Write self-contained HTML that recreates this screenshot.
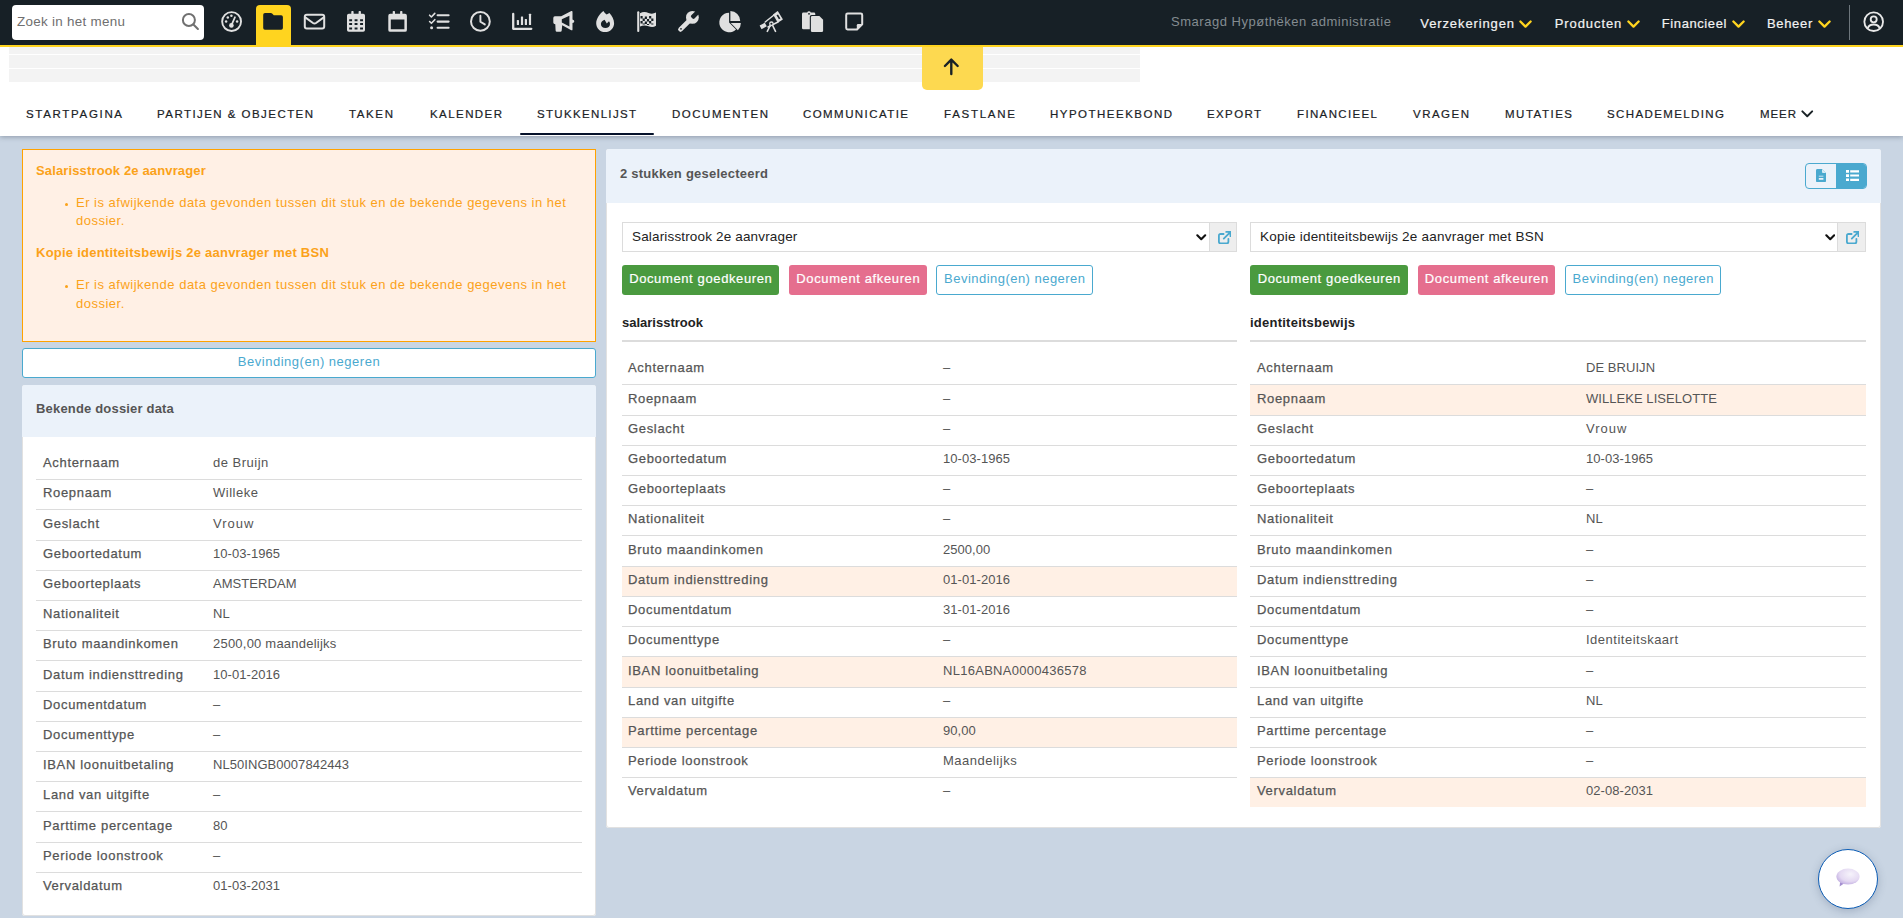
<!DOCTYPE html>
<html lang="nl"><head><meta charset="utf-8"><title>Stukkenlijst</title>
<style>
*{box-sizing:border-box;margin:0;padding:0}
html,body{width:1903px;height:918px;overflow:hidden}
body{background:#c9d5e3;font-family:"Liberation Sans",sans-serif;font-size:13px;color:#555;position:relative}
#top{position:absolute;left:0;top:0;width:1903px;height:47px;background:#172026;border-bottom:2px solid #ffd41f;z-index:5}
#search{position:absolute;left:12px;top:5px;width:192px;height:35px;background:#fff;border-radius:4px}
#search .ph{position:absolute;left:5px;top:8px;font-size:13.4px;line-height:17px;color:#6f6f6f;letter-spacing:.3px;white-space:nowrap}
#search .mag{position:absolute;left:169px;top:7px;width:20px;height:20px}
#acttab{position:absolute;left:256px;top:5px;width:35px;height:42px;background:#ffd41f;border-radius:4px 4px 0 0}
#admin{position:absolute;left:1171px;top:14px;font-size:13px;line-height:16px;color:#848c91;white-space:nowrap;letter-spacing:.52px}
.menu{position:absolute;top:16px;font-size:13px;line-height:16px;color:#f2f2f2;white-space:nowrap;letter-spacing:.5px;-webkit-text-stroke:.2px #f2f2f2}
.chev{position:absolute;top:19.6px;width:13px;height:8.5px}
#sep{position:absolute;left:1849px;top:5px;width:1.3px;height:35px;background:#6d767c}
#user{position:absolute;left:1862.9px;top:10.7px;width:21.4px;height:21.4px}
#nav{position:absolute;left:0;top:47px;width:1903px;height:89px;background:#fff;box-shadow:0 1px 5px rgba(40,50,70,.36);z-index:3}
.sk{position:absolute;left:9px;width:1131px;background:#f3f3f3}
#arrow{position:absolute;left:921.5px;top:0;width:61px;height:42.5px;background:#fdd950;border-radius:0 0 5px 5px;display:flex;align-items:center;justify-content:center}
.tab{position:absolute;top:59.3px;font-size:11.5px;line-height:16px;color:#1a2226;white-space:nowrap;letter-spacing:1px;-webkit-text-stroke:.2px #1a2226}
.mchev{position:absolute;left:1801px;top:63px;width:12.5px;height:8px}
#uline{position:absolute;left:520px;top:86px;width:134px;height:2px;background:#06122b;border-radius:1px}
#alert{position:absolute;left:22px;top:149px;width:574px;height:193px;background:#fff0e5;border:1px solid #ffa200;color:#fba21a}
#alert h4{position:absolute;left:13px;font-size:13px;line-height:16px;font-weight:bold;white-space:nowrap;letter-spacing:.14px}
#alert h4.b{letter-spacing:.24px}
#alert p{position:absolute;left:53px;font-size:13px;line-height:17.8px;white-space:nowrap;letter-spacing:.5px}
#alert .dot{position:absolute;left:41.7px;width:3.4px;height:3.4px;border-radius:50%;background:#fba21a}
#negbtn{position:absolute;left:22px;top:348px;width:574px;height:30px;background:#fff;border:1px solid #4aa9cf;border-radius:3px;color:#4aa9cf;font-size:13px;letter-spacing:.52px;text-align:center;line-height:26px}
#cardL{position:absolute;left:22px;top:385px;width:574px;height:531px;background:#fff;border-radius:3px;overflow:hidden;box-shadow:inset 0 0 0 1px #e1e1e1}
.hd{position:absolute;left:0;top:0;width:100%;background:#ebf2fa}
#cardL .hd{height:52px}
.ht{position:absolute;font-weight:bold;font-size:13px;line-height:16px;color:#555;white-space:nowrap}
#cardL .ht{left:14px;top:16px;letter-spacing:.18px}
.tbl{position:absolute}
.row{position:relative;height:30px;border-bottom:1px solid #dcdcdc}
.row.last{border-bottom:0}
.row.last span{bottom:8.5px}
.row.hl{background:#fff0e5}
.row span{position:absolute;bottom:8.5px;line-height:16px;white-space:nowrap}
.row .l{letter-spacing:.67px;-webkit-text-stroke:.25px #555}
.row .v{letter-spacing:.12px}
.tl{left:14px;top:65px;width:546px}
.tl .l{left:7px}.tl .v{left:177px}
#cardR{position:absolute;left:606px;top:149px;width:1275px;height:679px;background:#fff;border-radius:3px;overflow:hidden;box-shadow:inset 0 0 0 1px #e1e1e1}
#cardR .hd{height:54px}
#cardR .ht{left:14px;top:17px;letter-spacing:.23px}
#toggle{position:absolute;left:1199px;top:14px;width:62px;height:26px;border:1px solid #4aa9cf;border-radius:4px;overflow:hidden}
#toggle span{position:absolute;top:0;height:24px;display:flex;align-items:center;justify-content:center}
#toggle .t1{left:0;width:30px}
#toggle .t2{left:30px;width:30px;background:#4aa9cf}
.col{position:absolute;top:0;width:616px;height:678px}
.sel{position:absolute;left:0;top:73px;width:588px;height:30px;border:1px solid #dcdcdc;background:#fff}
.sel .st{position:absolute;left:9px;top:5px;font-size:13.5px;line-height:17px;color:#222;white-space:nowrap;letter-spacing:.16px}
.sel .st.b{letter-spacing:.23px}
.sel .sarr{position:absolute;left:573.6px;top:11.2px;width:10.5px;height:7px}
.addon{position:absolute;left:587.5px;top:73px;width:28px;height:30px;background:#eee;border:1px solid #dcdcdc;border-left:0}
.addon svg{position:absolute;left:8.4px;top:7.6px;width:13.4px;height:13.4px}
.c1 .sel{width:587.5px}.c1 .addon{width:27.5px}.c1 .hr,.c1 .tbl{width:615px}.c1 .sarr{left:573.2px}
.btn{position:absolute;top:116px;height:30px;border-radius:3px;font-size:13px;line-height:27px;text-align:center;white-space:nowrap}
.btn.g{background:#4a9a3f;color:#fff}
.btn.p{background:#e56e8e;color:#fff}
.btn.o{background:#fff;border:1px solid #4aa9cf;color:#4aa9cf;line-height:25px}
.btn span{letter-spacing:.62px;margin-right:-.62px}
.btn.o span{letter-spacing:.47px}
.btn.g span,.btn.p span{-webkit-text-stroke:.2px #fff}
h5{position:absolute;left:0;top:166px;font-size:13px;line-height:16px;font-weight:bold;color:#222;white-space:nowrap}
.hr{position:absolute;left:0;top:191px;width:616px;height:2px;background:#dcdcdc}
.tm,.tr{left:0;top:205px;width:616px}
.tm .l{left:6px}.tm .v{left:321px}
.tr .l{left:7px}.tr .v{left:336px}
#chat{position:absolute;left:1818px;top:849px;width:60px;height:60px;border-radius:50%;background:#fff;border:1.8px solid #0b5cb5;box-shadow:0 2px 8px rgba(60,80,110,.28);display:flex;align-items:center;justify-content:center;z-index:9}

</style></head><body>
<div id="top">
<div id="search"><span class="ph">Zoek in het menu</span><svg class="mag" viewBox="0 0 20 20"><circle cx="7.9" cy="8" r="6" fill="none" stroke="#707070" stroke-width="2"/><path d="M12.4 12.6 L16.9 16.9" stroke="#707070" stroke-width="2.1" stroke-linecap="round"/></svg></div>
<div id="acttab"></div>
<svg id="icons" width="900" height="46" viewBox="0 0 900 46" style="position:absolute;left:0;top:0">
<g fill="none" stroke="#e0e0e0" stroke-width="2" stroke-linecap="round" stroke-linejoin="round">
<!-- gauge -->
<circle cx="231.6" cy="21.6" r="9.45" stroke-width="1.9"/>
<path d="M231.4 25.4 L235 17.2" stroke-width="1.7"/>
<!-- envelope -->
<rect x="304.8" y="14.8" width="19.4" height="13.6" rx="2"/>
<path d="M305.6 17.6 L313 23 Q314.5 24 316 23 L323.4 17.6"/>
<!-- tasks -->
<path d="M429.6 15.2 L431.4 17 L434.8 13.4 M429.6 21.5 L431.4 23.3 L434.8 19.7" stroke-width="1.6"/>
<path d="M437.6 15.2 H448.6 M437.6 21.6 H448.6 M437.6 27.8 H448.6" stroke-width="2.1"/>
<!-- clock -->
<circle cx="480.4" cy="21.4" r="9.4"/>
<path d="M480.4 15.8 V21.8 L484.8 24.4" stroke-width="1.9"/>
<!-- chart-bar axis -->
<path d="M513.2 14 V28.8 H531.3" stroke-width="2.3"/>
<!-- telescope legs + tube outline -->
<path d="M770.5 25 L767.3 31.4 M772.4 25 L775.5 31.4" stroke-width="1.6"/>
<path d="M765.2 22 L774 15 M768 27 L778 22" stroke-width="1.5"/>
<circle cx="771.4" cy="23.7" r="1.7" stroke-width="1.3" fill="#172026"/>
<!-- sticky note -->
<path d="M847.6 13.5 H860.8 a1.4 1.4 0 0 1 1.4 1.4 V24.2 L857 29.5 H847.6 a1.4 1.4 0 0 1 -1.4 -1.4 V14.9 a1.4 1.4 0 0 1 1.4 -1.4 z"/>
</g>
<g fill="#e0e0e0">
<!-- gauge bits -->
<circle cx="231.4" cy="25.4" r="2.3"/>
<circle cx="226.1" cy="21.5" r="1.25"/><circle cx="227.8" cy="17.6" r="1.25"/><circle cx="231.4" cy="15.7" r="1.25"/><circle cx="237.1" cy="21.5" r="1.25"/>
<!-- tasks dot -->
<circle cx="431.6" cy="27.8" r="1.5"/>
<!-- calendar-alt -->
<rect x="351.3" y="11" width="2.3" height="4.5" rx=".8"/><rect x="358.6" y="11" width="2.3" height="4.5" rx=".8"/>
<path fill-rule="evenodd" d="M348.8 13.8 H363.2 a1.8 1.8 0 0 1 1.8 1.8 V30 a1.8 1.8 0 0 1 -1.8 1.8 H348.8 a1.8 1.8 0 0 1 -1.8 -1.8 V15.6 a1.8 1.8 0 0 1 1.8 -1.8 z M349.2 19.3 h2.9 v2.0 h-2.9 z M354.6 19.3 h2.9 v2.0 h-2.9 z M360.1 19.3 h2.9 v2.0 h-2.9 z M349.2 23.1 h2.9 v2.0 h-2.9 z M354.6 23.1 h2.9 v2.0 h-2.9 z M360.1 23.1 h2.9 v2.0 h-2.9 z M349.2 27.5 h2.9 v1.9 h-2.9 z M354.6 27.5 h2.9 v1.9 h-2.9 z M360.1 27.5 h2.9 v1.9 h-2.9 z"/>
<!-- calendar -->
<rect x="392.7" y="11" width="2.3" height="4.5" rx=".8"/><rect x="400.1" y="11" width="2.3" height="4.5" rx=".8"/>
<path fill-rule="evenodd" d="M390.2 13.8 H405 a1.9 1.9 0 0 1 1.9 1.9 V29.9 a1.9 1.9 0 0 1 -1.9 1.9 H390.2 a1.9 1.9 0 0 1 -1.9 -1.9 V15.7 a1.9 1.9 0 0 1 1.9 -1.9 z M390.8 19.5 H404.4 V29.2 H390.8 z"/>
<!-- chart bars -->
<rect x="516.8" y="20" width="2.2" height="4.9" rx=".5"/><rect x="520.9" y="16.6" width="2.2" height="8.3" rx=".5"/><rect x="524.8" y="19" width="2.2" height="5.9" rx=".5"/><rect x="528.9" y="13.8" width="2.2" height="11.1" rx=".5"/>
<!-- bullhorn -->
<path fill-rule="evenodd" d="M554.9 16.3 H561.2 L571.3 11.1 Q572.5 10.6 572.5 11.9 V19.4 Q574.3 19.8 574.3 21.2 Q574.3 22.6 572.5 23 V29.4 Q572.5 30.7 571.3 30.2 L562.2 25.2 L561.7 30.6 Q561.6 31.8 560.4 31.8 H556.9 Q555.7 31.8 555.6 30.6 L555.3 24.2 Q553.3 24.2 553.3 22.4 V17.9 Q553.3 16.3 554.9 16.3 Z M561.8 19.3 V22.4 L569.4 26.6 V15.8 Z"/>
<!-- fire -->
<path fill-rule="evenodd" d="M603.4 11 C604.2 12.4 605.4 13.6 606.6 14.5 C607.6 14 608.6 13.5 609.4 12.9 C612 15.4 614.1 19.4 614.1 23.2 C614.1 28.2 610.1 32.1 605.1 32.1 C600.1 32.1 596.2 28.2 596.2 23.2 C596.2 18.4 600 13.6 603.4 11 Z M604.6 19.8 C602.3 20.6 600.9 22.2 600.9 24 C600.9 26.4 602.9 28 605.4 28 C608 28 610 26.4 610 24 C610 22.9 609.6 22 609 21.2 L606.8 23.4 Z"/>
<!-- flag -->
<rect x="637.2" y="11.2" width="2.1" height="20.8" rx="1"/>
<path d="M640 13.2 C643 11.6 646 12 648.5 13 C651 14 653.5 14 656 12.6 V25.8 C653.5 27.4 651 27.2 648.5 26.2 C646 25.2 643 25 640 26.6 Z"/>
<!-- wrench -->
<circle cx="692.4" cy="17.4" r="6.4"/>
<path d="M690.6 19.3 L680.5 29.4" stroke="#e0e0e0" stroke-width="4.7" stroke-linecap="round"/>
<rect x="-2.25" y="-9" width="4.5" height="9.4" rx="1.4" transform="translate(692.2,17.6) rotate(45)" fill="#172026"/>
<!-- pie -->
<path d="M729.1 22.5 L736.03 29.43 A9.8 9.8 0 1 1 729.1 12.7 Z"/>
<path d="M730.7 23 L740.9 23 A10.2 10.2 0 0 1 737.9 30.2 Z"/>
<path d="M730.4 20.9 L730.4 11.1 A9.8 9.8 0 0 1 740.2 20.9 Z"/>
<!-- telescope -->
<path d="M759.6 25.6 L764.8 22.7 L766.8 26.3 L761.6 29.2 Z"/>
<path fill-rule="evenodd" d="M773 14.5 L777.3 11.2 Q777.8 10.9 778.1 11.4 L782.7 19 Q783 19.5 782.5 19.8 L777.8 22.7 Z M776.5 15.3 L778 14.4 L780.4 18.4 L778.9 19.3 Z"/>
<!-- paste -->
<path fill-rule="evenodd" d="M803.4 12.6 H807.2 A1.9 1.9 0 0 1 810.8 12.6 H813.9 Q815.3 12.6 815.3 14 V15 H811.6 Q809.8 15 809.8 16.8 V29.3 H803.4 Q802 29.3 802 27.9 V14 Q802 12.6 803.4 12.6 Z M809 12.9 a.85 .85 0 1 0 0.01 0 z"/>
<path d="M812.2 16 H819.4 L823.1 19.8 V30.7 Q823.1 32.1 821.7 32.1 H812.2 Q810.9 32.1 810.9 30.7 V17.4 Q810.9 16 812.2 16 Z"/>
<!-- sticky fold -->
<path d="M862.2 24 H858 Q856.8 24 856.8 25.2 V29.5 Z"/>
</g>
<g fill="#172026">
<!-- folder -->
<path d="M263.2 14.8 a1.8 1.8 0 0 1 1.8 -1.8 h5.9 q.7 0 1.2 .5 l1.7 1.7 h7.3 a1.8 1.8 0 0 1 1.8 1.8 v11 a1.8 1.8 0 0 1 -1.8 1.8 h-16.1 a1.8 1.8 0 0 1 -1.8 -1.8 z"/>
<!-- flag checkers -->
<path d="M640.50 15.90 h2.15 v2.5 h-2.15z M644.80 16.40 h2.15 v2.5 h-2.15z M649.10 15.90 h2.15 v2.5 h-2.15z M642.65 18.40 h2.15 v2.5 h-2.15z M646.95 18.90 h2.15 v2.5 h-2.15z M651.25 18.40 h2.15 v2.5 h-2.15z M640.50 20.90 h2.15 v2.5 h-2.15z M644.80 21.40 h2.15 v2.5 h-2.15z M649.10 20.90 h2.15 v2.5 h-2.15z M642.65 23.40 h2.15 v1.2 h-2.15z M646.95 23.90 h2.15 v1.2 h-2.15z M651.25 23.40 h2.15 v1.2 h-2.15z"/>
<circle cx="681" cy="28.8" r=".85"/>
</g>
</svg>

<span id="admin">Smaragd Hypøthëken administratie</span>
<span class="menu" style="left:1420.3px;letter-spacing:0.89px">Verzekeringen</span><svg class="chev" style="left:1519.3px" viewBox="0 0 14 9"><path d="M1.5 1.5 L7 7 L12.5 1.5" fill="none" stroke="#ffd41f" stroke-width="2.5" stroke-linecap="round" stroke-linejoin="round"/></svg>
<span class="menu" style="left:1554.7px;letter-spacing:0.92px">Producten</span><svg class="chev" style="left:1626.6px" viewBox="0 0 14 9"><path d="M1.5 1.5 L7 7 L12.5 1.5" fill="none" stroke="#ffd41f" stroke-width="2.5" stroke-linecap="round" stroke-linejoin="round"/></svg>
<span class="menu" style="left:1661.8px;letter-spacing:0.59px">Financieel</span><svg class="chev" style="left:1731.5px" viewBox="0 0 14 9"><path d="M1.5 1.5 L7 7 L12.5 1.5" fill="none" stroke="#ffd41f" stroke-width="2.5" stroke-linecap="round" stroke-linejoin="round"/></svg>
<span class="menu" style="left:1766.9px;letter-spacing:0.70px">Beheer</span><svg class="chev" style="left:1818px" viewBox="0 0 14 9"><path d="M1.5 1.5 L7 7 L12.5 1.5" fill="none" stroke="#ffd41f" stroke-width="2.5" stroke-linecap="round" stroke-linejoin="round"/></svg>
<div id="sep"></div>
<svg id="user" viewBox="0 0 22 22"><circle cx="11" cy="11" r="9.6" fill="none" stroke="#e8e8e8" stroke-width="1.9"/><circle cx="11" cy="8.6" r="3.1" fill="none" stroke="#e8e8e8" stroke-width="1.9"/><path d="M4.9 17.6 C6 14.6 8 13.9 11 13.9 C14 13.9 16 14.6 17.1 17.6" fill="none" stroke="#e8e8e8" stroke-width="1.9"/></svg>
</div>
<div id="nav">
<div class="sk" style="top:0;height:7px"></div><div class="sk" style="top:8px;height:13px"></div><div class="sk" style="top:22px;height:13px"></div>
<div id="arrow"><svg viewBox="0 0 20 20" width="20.6" height="20.6" style="margin-top:-3.4px;margin-left:-.6px"><path d="M10 17.5 V3.5 M3.8 9.7 L10 3.5 L16.2 9.7" fill="none" stroke="#1a2226" stroke-width="2.3" stroke-linecap="round" stroke-linejoin="round"/></svg></div>
<span class="tab" style="left:26px;letter-spacing:1.68px">STARTPAGINA</span>
<span class="tab" style="left:157px;letter-spacing:1.45px">PARTIJEN &amp; OBJECTEN</span>
<span class="tab" style="left:349px;letter-spacing:1.62px">TAKEN</span>
<span class="tab" style="left:430px;letter-spacing:1.43px">KALENDER</span>
<span class="tab" style="left:537px;letter-spacing:1.33px">STUKKENLIJST</span>
<span class="tab" style="left:672px;letter-spacing:1.51px">DOCUMENTEN</span>
<span class="tab" style="left:803px;letter-spacing:1.43px">COMMUNICATIE</span>
<span class="tab" style="left:944px;letter-spacing:1.74px">FASTLANE</span>
<span class="tab" style="left:1050px;letter-spacing:1.49px">HYPOTHEEKBOND</span>
<span class="tab" style="left:1207px;letter-spacing:1.38px">EXPORT</span>
<span class="tab" style="left:1297px;letter-spacing:1.36px">FINANCIEEL</span>
<span class="tab" style="left:1413px;letter-spacing:1.48px">VRAGEN</span>
<span class="tab" style="left:1505px;letter-spacing:1.51px">MUTATIES</span>
<span class="tab" style="left:1607px;letter-spacing:1.39px">SCHADEMELDING</span>
<span class="tab" style="left:1760px;letter-spacing:0.92px">MEER</span>
<svg class="mchev" viewBox="0 0 14 9"><path d="M1.5 1.5 L7 7 L12.5 1.5" fill="none" stroke="#1a2226" stroke-width="2.2" stroke-linecap="round" stroke-linejoin="round"/></svg>
<div id="uline"></div>
</div>

<div id="alert">
<h4 style="top:13px">Salarisstrook 2e aanvrager</h4>
<i class="dot" style="top:52.8px"></i>
<p style="top:44px">Er is afwijkende data gevonden tussen dit stuk en de bekende gegevens in het<br>dossier.</p>
<h4 class="b" style="top:95px">Kopie identiteitsbewijs 2e aanvrager met BSN</h4>
<i class="dot" style="top:134.8px"></i>
<p style="top:126px;line-height:18.8px">Er is afwijkende data gevonden tussen dit stuk en de bekende gegevens in het<br>dossier.</p>
</div>
<div id="negbtn"><span>Bevinding(en) negeren</span></div>

<div id="cardL">
<div class="hd"><span class="ht">Bekende dossier data</span></div>
<div class="tbl tl">
<div class="row" style="height:30px"><span class="l">Achternaam</span><span class="v" style="letter-spacing:0.5px">de Bruijn</span></div>
<div class="row" style="height:30px"><span class="l">Roepnaam</span><span class="v" style="letter-spacing:0.5px">Willeke</span></div>
<div class="row" style="height:31px"><span class="l">Geslacht</span><span class="v" style="letter-spacing:1.0px">Vrouw</span></div>
<div class="row" style="height:30px"><span class="l">Geboortedatum</span><span class="v" style="letter-spacing:0.05px">10-03-1965</span></div>
<div class="row" style="height:30px"><span class="l">Geboorteplaats</span><span class="v" style="letter-spacing:0.05px">AMSTERDAM</span></div>
<div class="row" style="height:30px"><span class="l">Nationaliteit</span><span class="v" style="letter-spacing:0.05px">NL</span></div>
<div class="row" style="height:30px"><span class="l">Bruto maandinkomen</span><span class="v" style="letter-spacing:0.22px">2500,00 maandelijks</span></div>
<div class="row" style="height:31px"><span class="l">Datum indiensttreding</span><span class="v" style="letter-spacing:0.05px">10-01-2016</span></div>
<div class="row" style="height:30px"><span class="l">Documentdatum</span><span class="v" style="letter-spacing:0.05px">–</span></div>
<div class="row" style="height:30px"><span class="l">Documenttype</span><span class="v" style="letter-spacing:0.05px">–</span></div>
<div class="row" style="height:30px"><span class="l">IBAN loonuitbetaling</span><span class="v" style="letter-spacing:0.05px">NL50INGB0007842443</span></div>
<div class="row" style="height:30px"><span class="l">Land van uitgifte</span><span class="v" style="letter-spacing:0.05px">–</span></div>
<div class="row" style="height:31px"><span class="l">Parttime percentage</span><span class="v" style="letter-spacing:0.05px">80</span></div>
<div class="row" style="height:30px"><span class="l">Periode loonstrook</span><span class="v" style="letter-spacing:0.05px">–</span></div>
<div class="row last" style="height:29px"><span class="l">Vervaldatum</span><span class="v" style="letter-spacing:0.05px">01-03-2031</span></div>
</div>
</div>

<div id="cardR">
<div class="hd"><span class="ht">2 stukken geselecteerd</span>
<div id="toggle"><span class="t1"></span><span class="t2"></span><svg style="position:absolute;left:10px;top:4.5px" viewBox="0 0 10 13.4" width="10" height="13.4"><path d="M0 1.4 C0 .6 .6 0 1.4 0 H6 L10 4 V12 C10 12.8 9.4 13.4 8.6 13.4 H1.4 C.6 13.4 0 12.8 0 12 Z" fill="#4aa9cf"/><path d="M6 0 V3 Q6 4 7 4 H10 Z" fill="#d7ebf5"/><path d="M2.8 7.2 H7.4" stroke="#ebf2fa" stroke-width=".8"/><path d="M2.8 9.8 H7.4" stroke="#ebf2fa" stroke-width="1.7"/></svg><svg style="position:absolute;left:40px;top:5.7px" viewBox="0 0 13.2 11.2" width="13.2" height="11.2"><path d="M0 0h3v2.7h-3z M0 4.3h3v2.6h-3z M0 8.5h3v2.7h-3z M4.2 .3h9v2.1h-9z M4.2 4.5h9v2.1h-9z M4.2 8.8h9v2.1h-9z" fill="#fff"/></svg></div>
</div>
<div class="col c1" style="left:16px">
<div class="sel"><span class="st">Salarisstrook 2e aanvrager</span><svg class="sarr" viewBox="0 0 12 8"><path d="M1.5 1.5 L6 6 L10.5 1.5" fill="none" stroke="#111" stroke-width="2.4" stroke-linecap="round" stroke-linejoin="round"/></svg></div>
<div class="addon"><svg viewBox="0 0 13.4 13.4"><path d="M5.6 3 H2.6 Q.9 3 .9 4.7 V10.8 Q.9 12.5 2.6 12.5 H8.7 Q10.4 12.5 10.4 10.8 V7.8 M8.2 .9 H12.5 V5.2 M12.3 1.1 L5.8 7.6" fill="none" stroke="#4aa9cf" stroke-width="1.8" stroke-linecap="round" stroke-linejoin="round"/></svg></div>
<div class="btn g" style="left:0;width:157px"><span>Document goedkeuren</span></div>
<div class="btn p" style="left:167px;width:138px"><span>Document afkeuren</span></div>
<div class="btn o" style="left:314px;width:157px"><span>Bevinding(en) negeren</span></div>
<h5>salarisstrook</h5>
<div class="hr"></div>
<div class="tbl tm">
<div class="row" style="height:31px"><span class="l">Achternaam</span><span class="v" style="letter-spacing:0.05px">–</span></div>
<div class="row" style="height:31px"><span class="l">Roepnaam</span><span class="v" style="letter-spacing:0.05px">–</span></div>
<div class="row" style="height:30px"><span class="l">Geslacht</span><span class="v" style="letter-spacing:0.05px">–</span></div>
<div class="row" style="height:30px"><span class="l">Geboortedatum</span><span class="v" style="letter-spacing:0.05px">10-03-1965</span></div>
<div class="row" style="height:30px"><span class="l">Geboorteplaats</span><span class="v" style="letter-spacing:0.05px">–</span></div>
<div class="row" style="height:30px"><span class="l">Nationaliteit</span><span class="v" style="letter-spacing:0.05px">–</span></div>
<div class="row" style="height:31px"><span class="l">Bruto maandinkomen</span><span class="v" style="letter-spacing:0.05px">2500,00</span></div>
<div class="row hl" style="height:30px"><span class="l">Datum indiensttreding</span><span class="v" style="letter-spacing:0.05px">01-01-2016</span></div>
<div class="row" style="height:30px"><span class="l">Documentdatum</span><span class="v" style="letter-spacing:0.05px">31-01-2016</span></div>
<div class="row" style="height:30px"><span class="l">Documenttype</span><span class="v" style="letter-spacing:0.05px">–</span></div>
<div class="row hl" style="height:31px"><span class="l">IBAN loonuitbetaling</span><span class="v" style="letter-spacing:0.28px">NL16ABNA0000436578</span></div>
<div class="row" style="height:30px"><span class="l">Land van uitgifte</span><span class="v" style="letter-spacing:0.05px">–</span></div>
<div class="row hl" style="height:30px"><span class="l">Parttime percentage</span><span class="v" style="letter-spacing:0.05px">90,00</span></div>
<div class="row" style="height:30px"><span class="l">Periode loonstrook</span><span class="v" style="letter-spacing:0.5px">Maandelijks</span></div>
<div class="row last" style="height:29px"><span class="l">Vervaldatum</span><span class="v" style="letter-spacing:0.05px">–</span></div>
</div>
</div>
<div class="col" style="left:644px">
<div class="sel"><span class="st b">Kopie identiteitsbewijs 2e aanvrager met BSN</span><svg class="sarr" viewBox="0 0 12 8"><path d="M1.5 1.5 L6 6 L10.5 1.5" fill="none" stroke="#111" stroke-width="2.4" stroke-linecap="round" stroke-linejoin="round"/></svg></div>
<div class="addon"><svg viewBox="0 0 13.4 13.4"><path d="M5.6 3 H2.6 Q.9 3 .9 4.7 V10.8 Q.9 12.5 2.6 12.5 H8.7 Q10.4 12.5 10.4 10.8 V7.8 M8.2 .9 H12.5 V5.2 M12.3 1.1 L5.8 7.6" fill="none" stroke="#4aa9cf" stroke-width="1.8" stroke-linecap="round" stroke-linejoin="round"/></svg></div>
<div class="btn g" style="left:0;width:158px"><span>Document goedkeuren</span></div>
<div class="btn p" style="left:168px;width:137px"><span>Document afkeuren</span></div>
<div class="btn o" style="left:315px;width:156px"><span>Bevinding(en) negeren</span></div>
<h5 style="letter-spacing:.24px">identiteitsbewijs</h5>
<div class="hr"></div>
<div class="tbl tr">
<div class="row" style="height:31px"><span class="l">Achternaam</span><span class="v" style="letter-spacing:0.05px">DE BRUIJN</span></div>
<div class="row hl" style="height:31px"><span class="l">Roepnaam</span><span class="v" style="letter-spacing:0.05px">WILLEKE LISELOTTE</span></div>
<div class="row" style="height:30px"><span class="l">Geslacht</span><span class="v" style="letter-spacing:1.0px">Vrouw</span></div>
<div class="row" style="height:30px"><span class="l">Geboortedatum</span><span class="v" style="letter-spacing:0.05px">10-03-1965</span></div>
<div class="row" style="height:30px"><span class="l">Geboorteplaats</span><span class="v" style="letter-spacing:0.05px">–</span></div>
<div class="row" style="height:30px"><span class="l">Nationaliteit</span><span class="v" style="letter-spacing:0.05px">NL</span></div>
<div class="row" style="height:31px"><span class="l">Bruto maandinkomen</span><span class="v" style="letter-spacing:0.05px">–</span></div>
<div class="row" style="height:30px"><span class="l">Datum indiensttreding</span><span class="v" style="letter-spacing:0.05px">–</span></div>
<div class="row" style="height:30px"><span class="l">Documentdatum</span><span class="v" style="letter-spacing:0.05px">–</span></div>
<div class="row" style="height:30px"><span class="l">Documenttype</span><span class="v" style="letter-spacing:0.5px">Identiteitskaart</span></div>
<div class="row" style="height:31px"><span class="l">IBAN loonuitbetaling</span><span class="v" style="letter-spacing:0.05px">–</span></div>
<div class="row" style="height:30px"><span class="l">Land van uitgifte</span><span class="v" style="letter-spacing:0.05px">NL</span></div>
<div class="row" style="height:30px"><span class="l">Parttime percentage</span><span class="v" style="letter-spacing:0.05px">–</span></div>
<div class="row" style="height:30px"><span class="l">Periode loonstrook</span><span class="v" style="letter-spacing:0.05px">–</span></div>
<div class="row hl last" style="height:29px"><span class="l">Vervaldatum</span><span class="v" style="letter-spacing:0.05px">02-08-2031</span></div>
</div>
</div>
</div>

<div id="chat"><svg viewBox="0 0 26 20" width="26" height="20" style="margin-top:-3px"><defs><radialGradient id="bg" cx="60%" cy="35%" r="75%"><stop offset="0" stop-color="#f6f3fb"/><stop offset=".6" stop-color="#e4d9f2"/><stop offset="1" stop-color="#b8a3dc"/></radialGradient></defs><path d="M5.2 13.6 L4.6 18.6 L9 15.4 Z" fill="#a48fd0"/><ellipse cx="13" cy="8.6" rx="11.6" ry="8" fill="url(#bg)"/></svg></div>
</body></html>
